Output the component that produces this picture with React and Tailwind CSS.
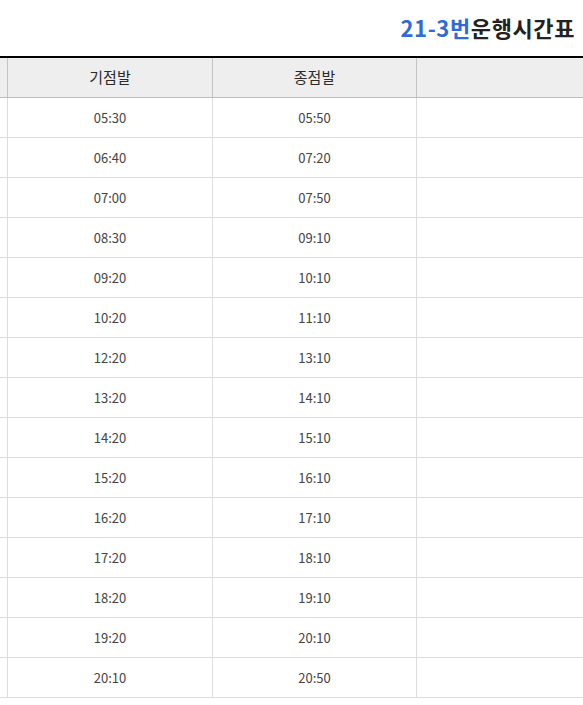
import React from "react";

const times = [
  ["05:30", "05:50"],
  ["06:40", "07:20"],
  ["07:00", "07:50"],
  ["08:30", "09:10"],
  ["09:20", "10:10"],
  ["10:20", "11:10"],
  ["12:20", "13:10"],
  ["13:20", "14:10"],
  ["14:20", "15:10"],
  ["15:20", "16:10"],
  ["16:20", "17:10"],
  ["17:20", "18:10"],
  ["18:20", "19:10"],
  ["19:20", "20:10"],
  ["20:10", "20:50"],
];

const font = { fontFamily: '"Noto Sans CJK KR", "Noto Sans", sans-serif' };

export default function App() {
  return (
    <div className="w-[583px] h-[705px] bg-white overflow-hidden text-[#333]" style={font}>
      {/* Title */}
      <div className="h-[56px] flex justify-end items-start pt-[11px] pr-[8px]">
        <h2 className="text-[22px] font-bold leading-[32px] tracking-[0.6px]">
          <span className="text-[#2f6bd6]">21-3번</span>
          <span className="text-[#222]">운행시간표</span>
        </h2>
      </div>

      {/* Table */}
      <div className="border-t-2 border-black">
        <div className="grid grid-cols-[8px_205px_204px_1fr] h-[40px] bg-[#eeeeee] border-b border-[#bdbdbd] text-[15px] text-[#2a2a2a]">
          <div className="border-r border-[#c4c4c4]" />
          <div className="border-r border-[#c4c4c4] flex items-center justify-center">기점발</div>
          <div className="border-r border-[#c4c4c4] flex items-center justify-center">종점발</div>
          <div />
        </div>
        {times.map((t, i) => (
          <div
            key={i}
            className="grid grid-cols-[8px_205px_204px_1fr] h-[40px] border-b border-[#dddddd] text-[13px] text-[#444]"
          >
            <div className="border-r border-[#dddddd]" />
            <div className="border-r border-[#dddddd] flex items-center justify-center">{t[0]}</div>
            <div className="border-r border-[#dddddd] flex items-center justify-center">{t[1]}</div>
            <div />
          </div>
        ))}
      </div>
    </div>
  );
}
